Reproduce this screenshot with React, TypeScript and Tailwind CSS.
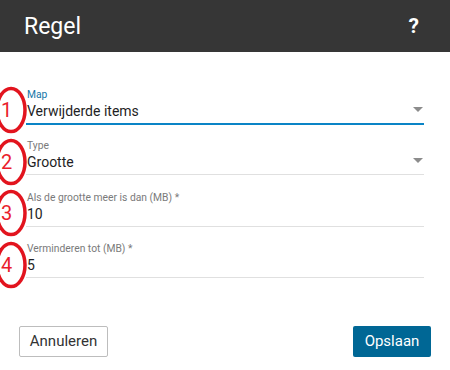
import React from "react";

function Arrow() {
  return (
    <svg width="10" height="5" viewBox="0 0 10 5" className="absolute right-[1px] bottom-[11px]">
      <path d="M0 0 L10 0 L5 5 Z" fill="#8c8c8c" />
    </svg>
  );
}

function Field({
  label,
  value,
  active,
  select,
  h,
}: {
  label: string;
  value: string;
  active?: boolean;
  select?: boolean;
  h: string;
}) {
  return (
    <div
      className={
        "relative flex flex-col justify-end " +
        h +
        (active ? " border-b-2 border-[#0a84c6]" : " border-b border-[#e0e0e0]")
      }
    >
      <div
        className={
          "text-[10.3px] leading-[12px] pl-[1px] " + (active ? "text-[#1476a8]" : "text-[#7a7a7a]")
        }
      >
        {label}
      </div>
      <div className="text-[14px] leading-[20px] text-[#1e1e24] pl-[1px] mb-[2px]">{value}</div>
      {select && <Arrow />}
    </div>
  );
}

export default function App() {
  return (
    <div
      className="w-[450px] h-[370px] bg-white relative overflow-hidden flex flex-col"
      style={{ fontFamily: "Roboto, 'Liberation Sans', sans-serif" }}
    >
      <div className="h-[52px] shrink-0 bg-[#363636] flex items-center justify-between pl-[24px] pr-[31px]">
        <span className="text-white text-[23px] leading-none">Regel</span>
        <span className="text-white text-[21px] font-bold leading-none">?</span>
      </div>
      <div className="px-[26px] pt-[22px] flex flex-col">
        <Field h="h-[51px]" label="Map" value="Verwijderde items" active select />
        <Field h="h-[50px]" label="Type" value="Grootte" select />
        <Field h="h-[52px]" label="Als de grootte meer is dan (MB) *" value="10" />
        <Field h="h-[51px]" label="Verminderen tot (MB) *" value="5" />
      </div>
      <div className="mt-auto mb-[13px] px-[19px] flex justify-between items-center">
        <button className="h-[31px] w-[89px] border border-[#bdbdbd] rounded-[2px] bg-white text-[15px] text-[#333]">
          Annuleren
        </button>
        <button className="h-[31px] w-[78px] rounded-[2px] bg-[#006795] text-[15px] text-white">
          Opslaan
        </button>
      </div>
      <svg className="absolute left-0 top-0" width="40" height="300" viewBox="0 0 40 300">
        <g fill="none" stroke="#e2141e" strokeWidth="3.5">
          <ellipse cx="11" cy="110" rx="14" ry="21.5" />
          <ellipse cx="11" cy="162" rx="14" ry="21.5" />
          <ellipse cx="11" cy="213" rx="14" ry="21.5" />
          <ellipse cx="11" cy="265" rx="14" ry="21.5" />
        </g>
      </svg>
      <div className="absolute left-[1px] top-[98px] text-[20px] leading-[24px] text-[#ea1d2c]">1</div>
      <div className="absolute left-[1px] top-[150px] text-[20px] leading-[24px] text-[#ea1d2c]">2</div>
      <div className="absolute left-[1px] top-[201px] text-[20px] leading-[24px] text-[#ea1d2c]">3</div>
      <div className="absolute left-[1px] top-[253px] text-[20px] leading-[24px] text-[#ea1d2c]">4</div>
    </div>
  );
}
